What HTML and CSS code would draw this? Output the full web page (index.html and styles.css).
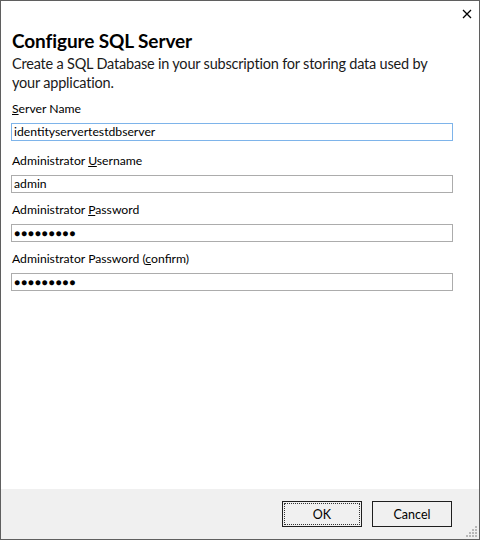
FILE: index.html
```html
<!DOCTYPE html>
<html>
<head>
<meta charset="utf-8">
<link rel="stylesheet" href="styles.css">
</head>
<body>
<div class="dialog">
  <div class="titlebar">
    <svg class="close" width="10" height="10" viewBox="0 0 10 10"><path d="M1 1 L9 9 M9 1 L1 9" stroke="#000" stroke-width="1.3" fill="none"/></svg>
  </div>
  <div class="content">
    <h1 class="title">Configure SQL Server</h1>
    <p class="desc">Create a SQL Database in your subscription for storing data used by<br>your application.</p>
    <div class="field first">
      <div class="label"><u>S</u>erver Name</div>
      <div class="textbox focused">identityservertestdbserver</div>
    </div>
    <div class="field second">
      <div class="label">Administrator <u>U</u>sername</div>
      <div class="textbox">admin</div>
    </div>
    <div class="field">
      <div class="label">Administrator <u>P</u>assword</div>
      <div class="textbox pw">●●●●●●●●●</div>
    </div>
    <div class="field">
      <div class="label">Administrator Password (<u>c</u>onfirm)</div>
      <div class="textbox pw">●●●●●●●●●</div>
    </div>
  </div>
  <div class="footer">
    <div class="button default"><span class="focusrect">OK</span></div>
    <div class="button">Cancel</div>
    <svg class="grip" width="12" height="12" viewBox="0 0 12 12">
      <g fill="#b8b8b8">
        <rect x="9" y="0" width="2" height="2"/>
        <rect x="6" y="3" width="2" height="2"/><rect x="9" y="3" width="2" height="2"/>
        <rect x="3" y="6" width="2" height="2"/><rect x="6" y="6" width="2" height="2"/><rect x="9" y="6" width="2" height="2"/>
        <rect x="0" y="9" width="2" height="2"/><rect x="3" y="9" width="2" height="2"/><rect x="6" y="9" width="2" height="2"/><rect x="9" y="9" width="2" height="2"/>
      </g>
    </svg>
  </div>
</div>
</body>
</html>
```
FILE: styles.css
```css
html, body {
  margin: 0;
  padding: 0;
  background: #ffffff;
}
body {
  font-family: "Lato", "Noto Sans", sans-serif;
  color: #000;
}
.dialog {
  width: 480px;
  height: 540px;
  box-sizing: border-box;
  border: 1px solid #5f5f5f;
  display: flex;
  flex-direction: column;
  position: relative;
  background: #fff;
}
.titlebar {
  height: 27px;
  display: flex;
  justify-content: flex-end;
  align-items: flex-start;
}
.close {
  margin: 8px 7px 0 0;
}
.content {
  flex: 1;
  padding: 0 26px 0 10px;
}
.title {
  margin: 0;
  font-size: 19px;
  font-weight: 700;
  letter-spacing: -0.1px;
  line-height: 26px;
  padding-left: 1px;
}
.desc {
  margin: 0;
  font-size: 14.5px;
  letter-spacing: -0.2px;
  line-height: 19px;
  padding-left: 1px;
  color: #1a1a1a;
  white-space: nowrap;
}
.field {
  margin-top: 9px;
}
.field.first {
  margin-top: 9px;
}
.field.second {
  margin-top: 12px;
}
.label {
  font-size: 12.2px;
  line-height: 16px;
  padding-left: 1px;
  margin-bottom: 6px;
}
.textbox {
  height: 18px;
  box-sizing: border-box;
  border: 1px solid #acacac;
  font-size: 12.2px;
  line-height: 16px;
  padding-left: 2px;
}
.textbox.focused {
  border-color: #7eb4ea;
}
.textbox.pw {
  font-size: 10px;
  letter-spacing: 0.9px;
}
.footer {
  height: 50px;
  background: #f0f0f0;
  display: flex;
  justify-content: flex-end;
  align-items: flex-start;
  gap: 10px;
  padding: 12px 27px 0 0;
  box-sizing: border-box;
  position: relative;
}
.button {
  width: 80px;
  height: 26px;
  box-sizing: border-box;
  border: 1px solid #1e1e1e;
  background: #f0f0f0;
  font-size: 12.5px;
  display: flex;
  align-items: center;
  justify-content: center;
}
.button.default {
  padding: 1px;
}
.focusrect {
  flex: 1;
  align-self: stretch;
  display: flex;
  align-items: center;
  justify-content: center;
  border: 1px dotted #333;
}
.grip {
  position: absolute;
  right: 1px;
  bottom: 1px;
}
```
